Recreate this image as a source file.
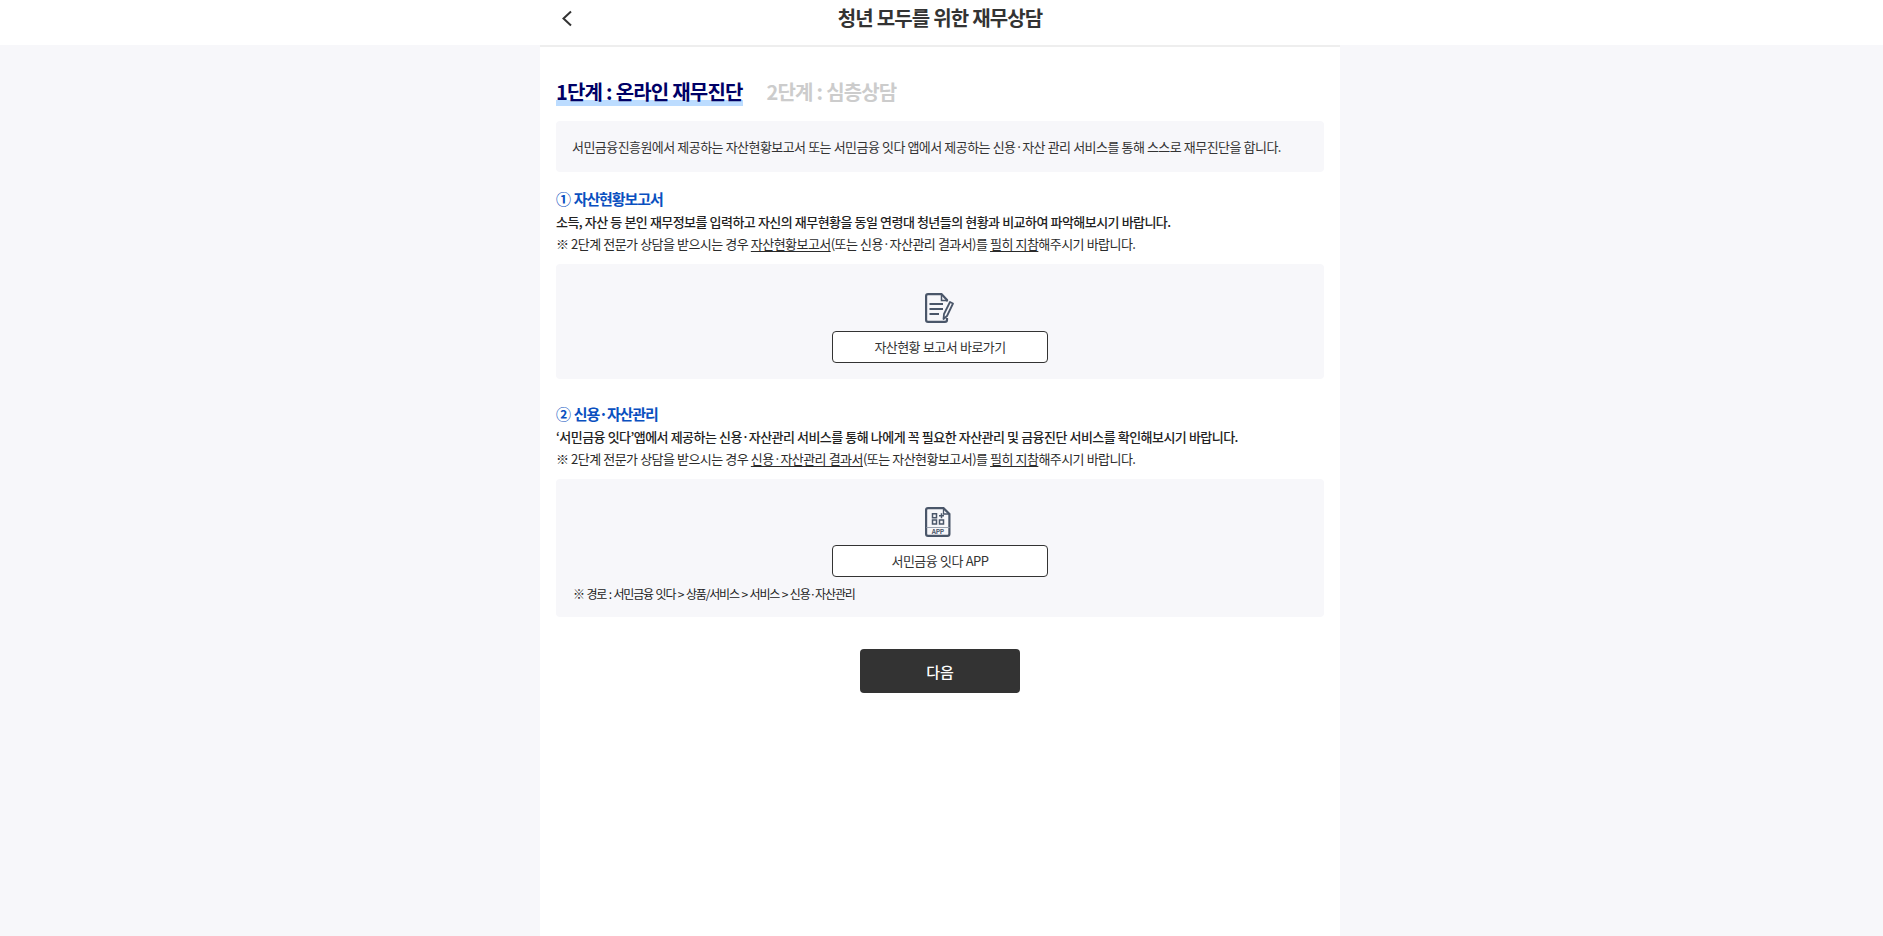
<template>
  <div class="page">
    <header class="topbar">
      <div class="topbar-inner">
        <button class="back" aria-label="뒤로">
          <svg width="12" height="17" viewBox="0 0 12 17" fill="none"><path d="M10 1.5 2.5 8.500 10 15.5" stroke="#333" stroke-width="2"/></svg>
        </button>
        <h1 class="title">청년 모두를 위한 재무상담</h1>
      </div>
    </header>
    <main class="card">
      <div class="tabs">
        <span class="tab active">1단계 : 온라인 재무진단</span>
        <span class="tab">2단계 : 심층상담</span>
      </div>
      <p class="info">서민금융진흥원에서 제공하는 자산현황보고서 또는 서민금융 잇다 앱에서 제공하는 신용·자산 관리 서비스를 통해 스스로 재무진단을 합니다.</p>

      <section class="sec first">
        <h2 class="sec-title">① 자산현황보고서</h2>
        <p class="lead">소득, 자산 등 본인 재무정보를 입력하고 자신의 재무현황을 동일 연령대 청년들의 현황과 비교하여 파악해보시기 바랍니다.</p>
        <p class="note">※ 2단계 전문가 상담을 받으시는 경우 <u>자산현황보고서</u>(또는 신용·자산관리 결과서)를 <u>필히 지참</u>해주시기 바랍니다.</p>
        <div class="panel">
          <svg class="icon" width="30" height="30" viewBox="0 0 30 30" fill="none" stroke="#4a5669" stroke-width="2.200">
            <path d="M22 8.500V7L16.500 1.100H3Q1.100 1.100 1.100 3V27Q1.100 28.900 3 28.900H20Q22 28.900 22 27V25"/>
            <path d="M16.500 1.500V7.500H22" stroke-width="1.500"/>
            <path d="M4.500 11H18M4.500 16H18M4.500 21H14"/>
            <path d="M18.500 26 19 21 25 9 28 10.500 22 23Z" stroke-width="1.800" stroke-linejoin="round"/>
          </svg>
          <button class="link-btn">자산현황 보고서 바로가기</button>
        </div>
      </section>

      <section class="sec second">
        <h2 class="sec-title">② 신용·자산관리</h2>
        <p class="lead">‘서민금융 잇다’앱에서 제공하는 신용·자산관리 서비스를 통해 나에게 꼭 필요한 자산관리 및 금융진단 서비스를 확인해보시기 바랍니다.</p>
        <p class="note">※ 2단계 전문가 상담을 받으시는 경우 <u>신용·자산관리 결과서</u>(또는 자산현황보고서)를 <u>필히 지참</u>해주시기 바랍니다.</p>
        <div class="panel app">
          <svg class="icon" width="30" height="30" viewBox="0 0 30 30" fill="none" stroke="#4a5669" stroke-width="2.200">
            <path d="M18.500 1.100H3Q1.100 1.100 1.100 3V27Q1.100 28.900 3 28.900H22.500Q24.400 28.900 24.400 27V7Z"/>
            <path d="M18.500 1.500V7H24.500" stroke-width="1.300"/>
            <rect x="7.500" y="6.750" width="4" height="4" stroke-width="1.500"/>
            <rect x="7.500" y="13" width="4" height="4" stroke-width="1.500"/>
            <rect x="14.500" y="13" width="4" height="4" stroke-width="1.500"/>
            <path d="M16.500 6.250V11.250M14 8.750H19" stroke-width="1.500"/>
            <path d="M1.500 20.500H24.500" stroke-width="1" stroke="#9aa2af"/>
            <text x="12.750" y="27" text-anchor="middle" class="app-label">APP</text>
          </svg>
          <button class="link-btn">서민금융 잇다 APP</button>
          <p class="path">※ 경로 : 서민금융 잇다 &gt; 상품/서비스 &gt; 서비스 &gt; 신용·자산관리</p>
        </div>
      </section>

      <div class="actions">
        <button class="next">다음</button>
      </div>
    </main>
  </div>
</template>

<style>
html, body { margin: 0; background: #f7f7fa; }
</style>

<style scoped>
* { box-sizing: border-box; }
.page {
  height: 936px;
  overflow: hidden;
  display: flex;
  flex-direction: column;
  padding-right: 3px;
  background: #f7f7fa;
  font-family: "Noto Sans CJK KR", "Noto Sans", sans-serif;
  color: #333;
  letter-spacing: -0.55px;
  word-spacing: 0.3px;
}
.topbar { height: 45px; background: #fff; flex: none; margin-right: -3px; padding-right: 3px; }
.topbar-inner { width: 800px; height: 45px; margin: 0 auto; position: relative; display: flex; align-items: center; justify-content: center; }
.back { position: absolute; left: 21px; top: 10px; padding: 0; border: 0; background: none; line-height: 0; }
.title { margin: 0 0 9px; font-size: 20px; font-weight: 700; line-height: 28px; letter-spacing: -0.9px; color: #333; }
.card { width: 800px; margin: 0 auto; flex: 1; background: #fff; border-top: 2px solid #eee; padding: 0 16px; }
.tabs { display: flex; gap: 24px; padding-top: 31px; height: 74px; }
.tab { font-size: 20px; font-weight: 700; line-height: 27px; height: 28px; color: #ccc; letter-spacing: -0.85px; }
.tab.active { color: #000066; background: linear-gradient(transparent 22px, #bcdcff 22px); }
.info { margin: 0; height: 51px; padding: 0 16px; display: flex; align-items: center; background: #f7f7fa; border-radius: 4px; font-size: 13px; color: #333; }
.sec-title { margin: 0 0 2px; font-size: 15px; font-weight: 700; line-height: 20px; color: #0a50c0; letter-spacing: -1.1px; word-spacing: 1.5px; }
.first { margin-top: 17px; }
.second { margin-top: 25px; }
.lead, .note { margin: 0; font-size: 13px; line-height: 22px; }
.lead { font-weight: 500; color: #222; }
.note { color: #2b2b2b; }
.note u { text-underline-offset: 2px; }
.panel { margin-top: 9px; height: 115px; background: #f7f7fa; border-radius: 4px; display: flex; flex-direction: column; align-items: center; padding-top: 29px; }
.panel.app { height: 138px; padding-top: 28px; }
.icon { display: block; flex: none; }
.app-label { font-size: 6.500px; font-weight: 700; fill: #4a5669; stroke: none; letter-spacing: -0.3px; }
.link-btn { margin-top: 8px; width: 216px; height: 32px; flex: none; background: #fff; border: 1px solid #333; border-radius: 4px; font: inherit; font-size: 13px; letter-spacing: -0.55px; word-spacing: 0.5px; color: #333; padding: 0 0 1px; }
.path { align-self: flex-start; margin: 8px 0 0 17px; font-size: 12px; line-height: 18px; letter-spacing: -1.15px; word-spacing: 1px; color: #222; }
.actions { display: flex; justify-content: center; margin-top: 32px; }
.next { width: 160px; height: 44px; background: #333; border: 0; border-radius: 4px; color: #fff; font: inherit; font-size: 15px; font-weight: 500; letter-spacing: 0; padding: 0; }
</style>
